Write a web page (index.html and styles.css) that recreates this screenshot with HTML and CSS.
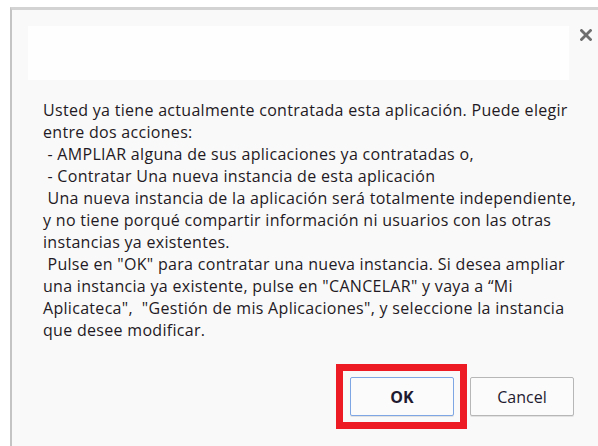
FILE: index.html
```html
<!DOCTYPE html>
<html lang="es">
<head>
<meta charset="utf-8">
<title>Confirmación</title>
<link rel="stylesheet" href="styles.css">
</head>
<body>
  <div class="dialog">
    <div class="dialog-head">
      <div class="title-box"></div>
      <button class="close" type="button" aria-label="Cerrar">
        <svg width="12" height="12" viewBox="0 0 12 12" aria-hidden="true">
          <path d="M1.5 1.5 L10.5 10.5 M10.5 1.5 L1.5 10.5" stroke="#6e6e6e" stroke-width="2.8" stroke-linecap="square"/>
        </svg>
      </button>
    </div>
    <div class="message">
      Usted ya tiene actualmente contratada esta aplicación. Puede elegir<br>
      entre dos acciones:<br>
      &nbsp;- AMPLIAR alguna de sus aplicaciones ya contratadas o,<br>
      &nbsp;- Contratar Una nueva instancia de esta aplicación<br>
      &nbsp;Una nueva instancia de la aplicación será totalmente independiente,<br>
      y no tiene porqué compartir información ni usuarios con las otras<br>
      instancias ya existentes.<br>
      &nbsp;Pulse en "OK" para contratar una nueva instancia. Si desea ampliar<br>
      una instancia ya existente, pulse en "CANCELAR" y vaya a “Mi<br>
      Aplicateca",&nbsp; "Gestión de mis Aplicaciones", y seleccione la instancia<br>
      que desee modificar.
    </div>
    <div class="actions">
      <span class="highlight">
        <button class="btn btn-ok" type="button">OK</button>
      </span>
      <button class="btn" type="button">Cancel</button>
    </div>
  </div>
</body>
</html>
```
FILE: styles.css
```css
html, body {
  margin: 0;
  padding: 0;
  background: #ffffff;
  height: 100%;
  overflow: hidden;
}

body {
  padding: 7px 0 0 10px;
  box-sizing: border-box;
  font-family: "Open Sans", "Noto Sans", sans-serif;
}

.dialog {
  height: 100%;
  background: #f9f9f9;
  border-top: 3px solid #d3d3d3;
  border-left: 2px solid #c4c4c4;
  box-sizing: border-box;
  padding: 16px 0 0 16px;
}

.dialog-head {
  display: flex;
  align-items: flex-start;
}

.title-box {
  width: 541px;
  height: 54px;
  background: #fefefe;
}

.close {
  margin: 3px 0 0 11px;
  padding: 0;
  border: 0;
  background: none;
  width: 12px;
  height: 12px;
  display: flex;
}

.message {
  margin: 19px 0 0 15px;
  font-size: 16px;
  line-height: 22px;
  letter-spacing: 0.3px;
  color: #1f1a24;
  white-space: nowrap;
}

.actions {
  display: flex;
  justify-content: flex-end;
  align-items: flex-start;
  gap: 16px;
  margin-top: 36px;
  padding-right: 24px;
}

/* red marker frame drawn around the OK button; negative margins keep it out of the row's spacing */
.highlight {
  display: flex;
  border: 7px solid #ed1c24;
  padding: 6px 6px 6px 7px;
  margin: -13px -13px -13px -14px;
}

.btn {
  width: 104px;
  height: 39px;
  border: 1px solid #b7b7b7;
  border-radius: 2px;
  background: #fbfbfb;
  font-family: "Open Sans", "Noto Sans", sans-serif;
  font-size: 16px;
  color: #1f1a30;
  box-shadow: 0 1px 0 #e2e2e2;
  padding: 0;
}

.btn-ok {
  border-color: #7ea6e4;
  font-weight: 700;
  font-size: 16px;
}
```
